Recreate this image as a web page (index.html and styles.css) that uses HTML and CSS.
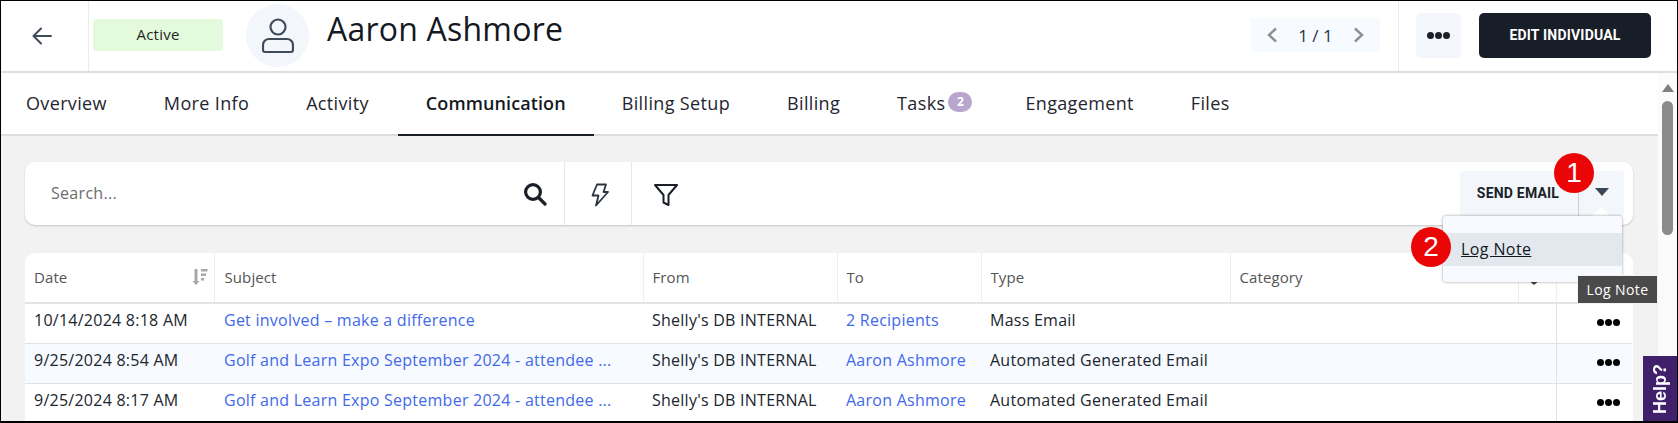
FILE: index.html
```html
<!DOCTYPE html>
<html lang="en">
<head>
<meta charset="utf-8">
<title>Aaron Ashmore</title>
<link rel="stylesheet" href="styles.css">
</head>
<body>
<div class="frame">
  <header class="header">
    <button class="back" aria-label="Back">
      <svg width="22" height="20" viewBox="0 0 22 20" fill="none" stroke="#3f4a5a" stroke-width="2" stroke-linecap="round" stroke-linejoin="round"><path d="M20 10H3M10 2.500 2.500 10l7.500 7.500"/></svg>
    </button>
    <span class="status">Active</span>
    <span class="avatar">
      <svg width="32" height="36" viewBox="0 0 32 36" fill="none" stroke="#3f4a5a" stroke-width="2.200"><circle cx="16" cy="9" r="7.500"/><path d="M7 21h18a6 6 0 0 1 6 6v5a2 2 0 0 1-2 2H3a2 2 0 0 1-2-2v-5a6 6 0 0 1 6-6z"/></svg>
    </span>
    <h1 class="name">Aaron Ashmore</h1>
    <div class="pager">
      <svg width="12" height="16" viewBox="0 0 12 16" fill="none" stroke="#8f8f8f" stroke-width="2.400"><path d="M10 1.500 3 8l7 6.500"/></svg>
      <span>1 / 1</span>
      <svg width="12" height="16" viewBox="0 0 12 16" fill="none" stroke="#8f8f8f" stroke-width="2.400"><path d="M2 1.500 9 8l-7 6.500"/></svg>
    </div>
    <div class="actions">
      <button class="more" aria-label="More"><span class="dots"><i></i><i></i><i></i></span></button>
      <button class="edit">EDIT INDIVIDUAL</button>
    </div>
  </header>
  <div class="body">
    <main class="main">
      <nav class="tabs">
        <a class="tab">Overview</a>
        <a class="tab">More Info</a>
        <a class="tab">Activity</a>
        <a class="tab active">Communication</a>
        <a class="tab">Billing Setup</a>
        <a class="tab">Billing</a>
        <a class="tab tasks">Tasks<span class="badge">2</span></a>
        <a class="tab">Engagement</a>
        <a class="tab">Files</a>
      </nav>
      <div class="content">
        <section class="toolbar">
          <div class="search">
            <span class="placeholder">Search...</span>
            <svg width="24" height="24" viewBox="0 0 24 24" fill="none" stroke="#1a1f28" stroke-width="3.200"><circle cx="10" cy="10" r="7.400"/><path d="m15.500 15.500 6.500 6.500" stroke-linecap="round"/></svg>
          </div>
          <div class="tool bolt">
            <svg width="18" height="24" viewBox="0 0 18 24" fill="none" stroke="#2b3442" stroke-width="1.800" stroke-linejoin="round"><path d="M6 1.500h9l-2.500 7.500H17L5 22.500 7.500 12.500H1.500z"/></svg>
          </div>
          <div class="tool filter">
            <svg width="26" height="24" viewBox="0 0 26 24" fill="none" stroke="#1a1f28" stroke-width="2" stroke-linejoin="round"><path d="M2 2h22l-8.500 10v10l-5-2.500V12z"/></svg>
          </div>
          <div class="send">
            <span class="send-label">SEND EMAIL</span>
            <span class="send-caret"></span>
          </div>
        </section>
        <section class="grid">
          <table>
            <colgroup>
              <col class="c-date"><col class="c-subject"><col class="c-from"><col class="c-to"><col class="c-type"><col class="c-cat"><col class="c-flag"><col class="c-menu">
            </colgroup>
            <thead>
              <tr>
                <th><span class="th-sort">Date
                  <svg width="16" height="18" viewBox="0 0 16 18" fill="#a8a8a8"><path d="M2.500 1h3v12h2L4 17 .5 13h2z"/><path d="M9 1h6.500v2.500H9zM9 5.500h5v2.500H9zM9 10h3v2.500H9z"/></svg>
                </span></th>
                <th>Subject</th>
                <th>From</th>
                <th>To</th>
                <th>Type</th>
                <th>Category</th>
                <th><span class="th-mark"></span></th>
                <th></th>
              </tr>
            </thead>
            <tbody>
              <tr>
                <td>10/14/2024 8:18 AM</td>
                <td><a>Get involved – make a difference</a></td>
                <td>Shelly's DB INTERNAL</td>
                <td><a>2 Recipients</a></td>
                <td>Mass Email</td>
                <td></td><td></td>
                <td class="row-menu"><span class="dots black"><i></i><i></i><i></i></span></td>
              </tr>
              <tr class="alt">
                <td>9/25/2024 8:54 AM</td>
                <td><a>Golf and Learn Expo September 2024 - attendee ...</a></td>
                <td>Shelly's DB INTERNAL</td>
                <td><a>Aaron Ashmore</a></td>
                <td>Automated Generated Email</td>
                <td></td><td></td>
                <td class="row-menu"><span class="dots black"><i></i><i></i><i></i></span></td>
              </tr>
              <tr>
                <td>9/25/2024 8:17 AM</td>
                <td><a>Golf and Learn Expo September 2024 - attendee ...</a></td>
                <td>Shelly's DB INTERNAL</td>
                <td><a>Aaron Ashmore</a></td>
                <td>Automated Generated Email</td>
                <td></td><td></td>
                <td class="row-menu"><span class="dots black"><i></i><i></i><i></i></span></td>
              </tr>
            </tbody>
          </table>
        </section>
      </div>
    </main>
    <aside class="scrollbar">
      <span class="scroll-up"></span>
      <span class="scroll-thumb"></span>
    </aside>
  </div>
  <span class="menu-notch"></span>
  <div class="menu">
    <a class="menu-item">Log Note</a>
  </div>
  <span class="tooltip">Log Note</span>
  <span class="callout one">1</span>
  <span class="callout two">2</span>
  <span class="help">Help?</span>
</div>
</body>
</html>
```
FILE: styles.css
```css
* { box-sizing: border-box; }
html, body { margin: 0; height: 100%; overflow: hidden; }
body { font-family: "Open Sans", sans-serif; color: #1a1f28; background: #fff; }
button { font: inherit; border: 0; padding: 0; cursor: pointer; }
h1 { margin: 0; }

.frame {
  position: relative;
  width: 1678px;
  height: 423px;
  border: solid #000;
  border-width: 1px 1px 2px 1px;
  display: flex;
  flex-direction: column;
  overflow: hidden;
  background: #fff;
}

/* header */
.header {
  flex: none;
  height: 72px;
  display: flex;
  align-items: center;
  border-bottom: 2px solid #dedede;
}
.back {
  width: 88px;
  height: 100%;
  background: #fff;
  border-right: 1px solid #ececec;
  display: flex;
  align-items: center;
  justify-content: center;
  padding-right: 6px;
}
.status {
  margin-left: 4px;
  width: 130px;
  height: 32px;
  margin-bottom: 2px;
  border-radius: 4px;
  background: #e3fbdc;
  font-size: 15px;
  letter-spacing: .25px;
  line-height: 31px;
  text-align: center;
  color: #222a22;
}
.avatar {
  margin-left: 23px;
  width: 63px;
  height: 63px;
  margin-bottom: 1px;
  border-radius: 50%;
  background: #f3f6fa;
  display: flex;
  align-items: center;
  justify-content: center;
}
.name {
  margin-left: 18px;
  margin-top: -15px;
  font-size: 32px;
  font-weight: 400;
  line-height: 42px;
  color: #15191f;
  letter-spacing: .22px;
}
.pager {
  margin-left: auto;
  width: 129px;
  height: 34px;
  margin-bottom: 2px;
  background: #f7faff;
  display: flex;
  align-items: center;
  justify-content: center;
  gap: 20px;
  font-size: 17px;
  color: #2b3442;
}
.actions {
  margin-left: 18px;
  height: 100%;
  width: 279px;
  border-left: 1px solid #ececec;
  padding: 0 26px 2px 17px;
  display: flex;
  align-items: center;
  gap: 18px;
}
.more {
  width: 45px;
  height: 45px;
  border-radius: 5px;
  background: #f3f6fa;
  display: flex;
  align-items: center;
  justify-content: center;
}
.edit {
  width: 172px;
  height: 45px;
  border-radius: 5px;
  background: #181e28;
  color: #fff;
  font-family: Roboto, sans-serif;
  font-weight: 700;
  font-size: 14px;
  letter-spacing: .2px;
}
.dots { display: inline-flex; gap: 1px; }
.dots i { width: 7px; height: 7px; border-radius: 50%; background: #1a1f28; }
.dots.black i { background: #000; }

/* layout */
.body { flex: 1; min-height: 0; display: flex; }
.main { flex: none; width: 1657px; display: flex; flex-direction: column; min-height: 0; }

/* tabs */
.tabs {
  flex: none;
  height: 63px;
  display: flex;
  align-items: stretch;
  border-bottom: 2px solid #dedede;
  padding-left: 25px;
  background: #fff;
}
.tab {
  margin-right: 57px;
  display: flex;
  align-items: center;
  font-size: 18px;
  letter-spacing: .35px;
  color: #1f2530;
  padding-bottom: 1px;
}
.tab.tasks { margin-right: 53px; }
.tab.active {
  font-weight: 600;
  letter-spacing: .1px;
  color: #15191f;
  margin: 0 28px -2px -28px;
  padding: 0 28px 1px;
  border-bottom: 2px solid #1a1f28;
}
.badge {
  margin-left: 3px;
  width: 24px;
  height: 20px;
  border-radius: 10px;
  background: #b9a6cd;
  color: #fff;
  font-size: 12px;
  font-weight: 700;
  letter-spacing: 0;
  line-height: 20px;
  text-align: center;
  margin-top: -2px;
}

/* content */
.content {
  flex: 1;
  min-height: 0;
  background: #f2f2f2;
  padding: 26px 25px 0 24px;
  overflow: hidden;
}
.toolbar {
  height: 63px;
  background: #fff;
  border-radius: 10px;
  box-shadow: 0 1px 2px rgba(0,0,0,.18);
  display: flex;
  align-items: stretch;
}
.search {
  width: 540px;
  padding: 0 17px 0 26px;
  display: flex;
  align-items: center;
  justify-content: space-between;
  border-right: 1px solid #e8e8e8;
}
.placeholder { font-size: 16px; letter-spacing: .3px; color: #6d6d6d; margin-bottom: 2px; }
.tool {
  width: 67px;
  border-right: 1px solid #e8e8e8;
  display: flex;
  align-items: center;
  justify-content: center;
  padding-top: 2px;
}
.tool.bolt { padding-left: 4px; }
.tool.filter { border-right: 0; }
.send {
  margin: 9px 9px 9px auto;
  width: 164px;
  background: #f3f6fa;
  border-radius: 4px;
  display: flex;
  align-items: stretch;
}
.send-label {
  width: 119px;
  border-right: 1px solid #cfcfcf;
  display: flex;
  align-items: center;
  justify-content: center;
  font-family: Roboto, sans-serif;
  font-weight: 700;
  font-size: 14px;
  letter-spacing: .2px;
  color: #1a1f28;
  padding: 0 2px 2px 0;
}
.send-caret {
  flex: 1;
  display: flex;
  align-items: center;
  justify-content: center;
  padding-bottom: 3px;
}
.send-caret::after {
  content: "";
  border-left: 7px solid transparent;
  border-right: 7px solid transparent;
  border-top: 8px solid #3b4657;
}

/* table */
.grid {
  margin-top: 28px;
  background: #fff;
  border-radius: 10px 10px 0 0;
  overflow: hidden;
}
table { width: 1607px; table-layout: fixed; border-collapse: collapse; font-size: 16px; letter-spacing: .25px; }
.c-date { width: 189px; }
.c-subject { width: 429px; }
.c-from { width: 194px; }
.c-to { width: 144px; }
.c-type { width: 249px; }
.c-cat { width: 288px; }
.c-flag { width: 38px; }
.c-menu { width: 76px; }
th {
  height: 50px;
  text-align: left;
  font-weight: 400;
  font-size: 15px;
  letter-spacing: .1px;
  color: #555;
  padding: 0 9px 2px;
  border-right: 1px solid #eeeeee;
  border-bottom: 2px solid #e4e4e4;
}
th:first-child { padding-right: 6px; }
th:last-child { border-right: 0; }
.th-sort { display: flex; align-items: center; justify-content: space-between; }
.th-mark {
  display: block;
  width: 0;
  margin: 12px 0 0;
  border-left: 6px solid transparent;
  border-right: 6px solid transparent;
  border-top: 5px solid #444;
}
td {
  height: 40px;
  padding: 0 9px 7px;
  border-bottom: 1px solid #dfe3e8;
  white-space: nowrap;
  color: #20252d;
  background: #fff;
}
td:nth-child(2), th:nth-child(2) { padding-left: 10px; }
tbody tr:last-child td { border-bottom: 0; }
tr.alt td { background: #f7faff; }
td a { color: #4169ea; }
td.row-menu { border-left: 1px solid #dfe3e8; padding: 0 0 7px 28px; text-align: center; }

/* scrollbar */
.scrollbar {
  flex: 1;
  background: #fbfbfb;
  display: flex;
  flex-direction: column;
  align-items: center;
  padding-top: 11px;
  gap: 9px;
}
.scroll-up {
  border-left: 6px solid transparent;
  border-right: 6px solid transparent;
  border-bottom: 8px solid #7f7f7f;
}
.scroll-thumb { width: 11px; height: 134px; border-radius: 6px; background: #8a8a8a; }

/* overlays */
.menu-notch {
  position: absolute;
  left: 1591px;
  top: 206px;
  border-left: 9px solid transparent;
  border-right: 9px solid transparent;
  border-bottom: 9px solid #fff;
  filter: drop-shadow(0 3px 0 #c9c9c9);
}
.menu {
  position: absolute;
  left: 1442px;
  top: 215px;
  width: 179px;
  height: 66px;
  padding-top: 17px;
  background: #f7faff;
  border-radius: 3px;
  box-shadow: 0 0 3px rgba(0,0,0,.4);
}
.menu-item {
  display: block;
  height: 33px;
  line-height: 32px;
  padding-left: 18px;
  background: #e3e8ef;
  font-size: 16px;
  letter-spacing: .4px;
  text-decoration: underline;
  color: #15191f;
}
.tooltip {
  position: absolute;
  left: 1576px;
  top: 274px;
  width: 81px;
  height: 29px;
  background: #4a4a4a;
  color: #fff;
  font-size: 14px;
  letter-spacing: .4px;
  line-height: 27px;
  text-align: center;
  border: 1px solid #f2f2f2;
}
.callout {
  position: absolute;
  width: 40px;
  height: 40px;
  border-radius: 50%;
  background: #ea0606;
  color: #fff;
  font-family: "Liberation Sans", sans-serif;
  font-size: 28px;
  line-height: 40px;
  text-align: center;
}
.callout.one { left: 1553px; top: 152px; }
.callout.two { left: 1410px; top: 226px; }
.help {
  position: absolute;
  right: 0;
  bottom: 0;
  width: 34px;
  height: 65px;
  background: #41206b;
  color: #fff;
  font-family: "Liberation Sans", sans-serif;
  font-weight: 700;
  font-size: 18px;
  writing-mode: vertical-rl;
  transform: rotate(180deg);
  text-align: center;
  line-height: 34px;
}
```
